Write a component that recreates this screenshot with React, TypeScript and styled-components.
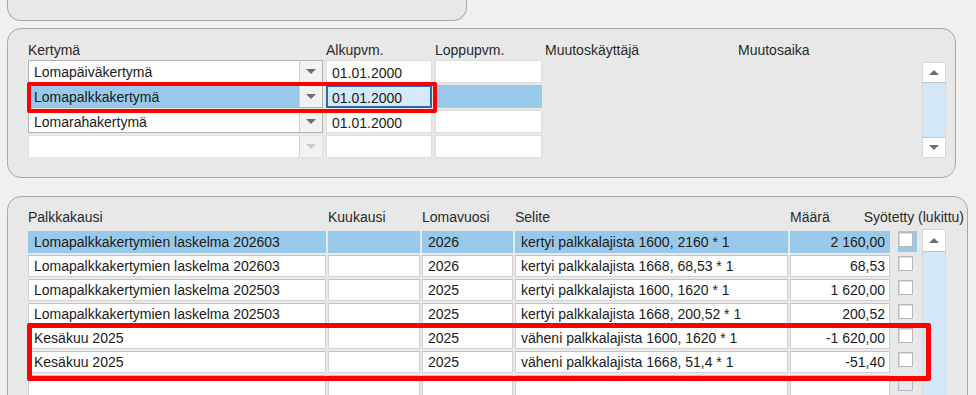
import * as React from "react";
import styled, { createGlobalStyle } from "styled-components";

const GlobalStyle = createGlobalStyle`
  html, body {
    margin: 0;
    height: 395px;
    overflow: hidden;
  }
  body {
    background: #f0f0f0;
    font-family: "Liberation Sans", Arial, sans-serif;
    font-size: 14px;
    color: #1a1a1a;
  }
`;

type Accrual = { name: string; start: string; selected?: boolean; focused?: boolean; disabled?: boolean };

const accruals: Accrual[] = [
  { name: "Lomapäiväkertymä", start: "01.01.2000" },
  { name: "Lomapalkkakertymä", start: "01.01.2000", selected: true, focused: true },
  { name: "Lomarahakertymä", start: "01.01.2000" },
  { name: "", start: "", disabled: true },
];

type Entry = { period: string; year: string; text: string; amount: string; selected?: boolean; empty?: boolean };

const entries: Entry[] = [
  { period: "Lomapalkkakertymien laskelma 202603", year: "2026", text: "kertyi palkkalajista 1600, 2160 * 1", amount: "2 160,00", selected: true },
  { period: "Lomapalkkakertymien laskelma 202603", year: "2026", text: "kertyi palkkalajista 1668, 68,53 * 1", amount: "68,53" },
  { period: "Lomapalkkakertymien laskelma 202503", year: "2025", text: "kertyi palkkalajista 1600, 1620 * 1", amount: "1 620,00" },
  { period: "Lomapalkkakertymien laskelma 202503", year: "2025", text: "kertyi palkkalajista 1668, 200,52 * 1", amount: "200,52" },
  { period: "Kesäkuu 2025", year: "2025", text: "väheni palkkalajista 1600, 1620 * 1", amount: "-1 620,00" },
  { period: "Kesäkuu 2025", year: "2025", text: "väheni palkkalajista 1668, 51,4 * 1", amount: "-51,40" },
  { period: "", year: "", text: "", amount: "", empty: true },
  { period: "", year: "", text: "", amount: "", empty: true },
];

const App = () => {
  return (
    <Page>
      <GlobalStyle />
      <TopPanel />

      <AccrualPanel>
        <AccrualGrid>
          <Label>Kertymä</Label>
          <Label>Alkupvm.</Label>
          <Label>Loppupvm.</Label>
          <Label>Muutoskäyttäjä</Label>
          <Label>Muutosaika</Label>
          <span />
          {accruals.map((a, i) => (
            <React.Fragment key={i}>
              <Combo $selected={a.selected} $disabled={a.disabled} style={{ gridRow: i + 2 }}>
                <ComboText>{a.name}</ComboText>
                <ComboButton>
                  <ArrowDown $disabled={a.disabled} />
                </ComboButton>
              </Combo>
              <DateInput $focused={a.focused} style={{ gridRow: i + 2 }}>
                {a.start}
              </DateInput>
              <DateInput $selected={a.selected} style={{ gridRow: i + 2 }} />
            </React.Fragment>
          ))}
          <Scrollbar $row="2 / span 4" $short>
            <ScrollButton>
              <ArrowUp />
            </ScrollButton>
            <ScrollTrack />
            <ScrollButton>
              <ArrowDown />
            </ScrollButton>
          </Scrollbar>
        </AccrualGrid>
      </AccrualPanel>

      <EntryPanel>
        <EntryGrid>
          <Label style={{ gridColumn: 1, gridRow: 1 }}>Palkkakausi</Label>
          <Label style={{ gridColumn: 2, gridRow: 1 }}>Kuukausi</Label>
          <Label style={{ gridColumn: 3, gridRow: 1 }}>Lomavuosi</Label>
          <Label style={{ gridColumn: 4, gridRow: 1 }}>Selite</Label>
          <Label style={{ gridColumn: 5, gridRow: 1 }}>Määrä</Label>
          <LockedLabel>Syötetty (lukittu)</LockedLabel>
          {entries.map((e, i) => (
            <React.Fragment key={i}>
              <Cell $selected={e.selected} style={{ gridRow: i + 2 }}>{e.period}</Cell>
              <Cell $selected={e.selected} style={{ gridRow: i + 2 }} />
              <Cell $selected={e.selected} style={{ gridRow: i + 2 }}>{e.year}</Cell>
              <Cell $selected={e.selected} style={{ gridRow: i + 2 }}>{e.text}</Cell>
              <Cell $selected={e.selected} $number style={{ gridRow: i + 2 }}>{e.amount}</Cell>
              <CheckCell $selected={e.selected} style={{ gridRow: i + 2 }}>
                <Checkbox $disabled={e.empty} />
              </CheckCell>
            </React.Fragment>
          ))}
          <Scrollbar $row="2 / -1">
            <ScrollButton $tall>
              <ArrowUp />
            </ScrollButton>
            <ScrollTrack />
          </Scrollbar>
        </EntryGrid>
      </EntryPanel>

      <Marker $left={27} $top={82} $width={410} $height={31} $thickness={4} />
      <Marker $left={27} $top={323} $width={904} $height={58} $thickness={5} />
    </Page>
  );
};

const Page = styled.div`
  position: relative;
  height: 395px;
  overflow: hidden;
  padding-left: 7px;
`;

const PanelBase = styled.div`
  box-sizing: border-box;
  background: #e8e8e8;
  border: 1px solid #a8a8a8;
  border-radius: 14px;
`;

const TopPanel = styled(PanelBase)`
  width: 460px;
  height: 21px;
  border-top: none;
  border-radius: 0 0 14px 14px;
`;

const AccrualPanel = styled(PanelBase)`
  margin-top: 7px;
  width: 949px;
  height: 150px;
  padding: 13px 0 0 20px;
`;

const EntryPanel = styled(PanelBase)`
  margin-top: 18px;
  width: 961px;
  height: 260px;
  padding: 12px 0 0 20px;
`;

const AccrualGrid = styled.div`
  display: grid;
  grid-template-columns: 295px 106px 107px 190px 181px 24px;
  grid-template-rows: 16px repeat(4, 23px);
  column-gap: 3px;
  row-gap: 2px;
`;

const EntryGrid = styled.div`
  display: grid;
  grid-template-columns: 298px 92px 91px 273px 100px 28px 24px 19px;
  grid-template-rows: 20px repeat(8, 22px);
  column-gap: 2px;
  row-gap: 2px;
`;

const Label = styled.div`
  line-height: 16px;
  color: #2a2a2a;
  white-space: nowrap;
`;

const LockedLabel = styled(Label)`
  grid-column: 5 / -1;
  grid-row: 1;
  justify-self: end;
  padding-right: 3px;
`;

const Combo = styled.div<{ $selected?: boolean; $disabled?: boolean }>`
  grid-column: 1;
  display: flex;
  box-sizing: border-box;
  border: 1px solid ${(p) => (p.$disabled ? "#e2e2e2" : "#b4b4b4")};
  background: ${(p) => (p.$selected ? "#99c9ea" : "#ffffff")};
`;

const ComboText = styled.div`
  flex: 1;
  display: flex;
  align-items: center;
  padding-left: 5px;
  white-space: nowrap;
`;

const ComboButton = styled.div`
  width: 22px;
  display: flex;
  align-items: center;
  justify-content: center;
  background: #f2f2f2;
  border-left: 1px solid #d0d0d0;
`;

const ArrowDown = styled.span<{ $disabled?: boolean }>`
  width: 0;
  height: 0;
  border-left: 5px solid transparent;
  border-right: 5px solid transparent;
  border-top: 5px solid ${(p) => (p.$disabled ? "#c9c9cc" : "#6c6c7c")};
`;

const ArrowUp = styled.span`
  width: 0;
  height: 0;
  border-left: 5px solid transparent;
  border-right: 5px solid transparent;
  border-bottom: 5px solid #6c6c7c;
`;

const DateInput = styled.div<{ $focused?: boolean; $selected?: boolean }>`
  box-sizing: border-box;
  display: flex;
  align-items: center;
  padding-left: ${(p) => (p.$focused ? "4px" : "5px")};
  padding-top: 2px;
  border: ${(p) =>
    p.$focused ? "2px solid #2c6aa6" : p.$selected ? "1px solid #99c9ea" : "1px solid #dedede"};
  background: ${(p) => (p.$focused ? "#d4e9f9" : p.$selected ? "#99c9ea" : "#ffffff")};
`;

const Scrollbar = styled.div<{ $row: string; $short?: boolean }>`
  grid-column: ${(p) => (p.$short ? 6 : 7)};
  grid-row: ${(p) => p.$row};
  margin-top: ${(p) => (p.$short ? "2px" : "-2px")};
  display: flex;
  flex-direction: column;
  box-sizing: border-box;
  border: 1px solid #d6d6d6;
  background: #ffffff;
`;

const ScrollButton = styled.div<{ $tall?: boolean }>`
  height: ${(p) => (p.$tall ? "21px" : "19px")};
  display: flex;
  align-items: center;
  justify-content: center;
  background: #ffffff;
`;

const ScrollTrack = styled.div`
  flex: 1;
  background: #d2e7f8;
  border-top: 1px solid #c4c4c4;
  border-bottom: 1px solid #c4c4c4;
`;

const Cell = styled.div<{ $selected?: boolean; $number?: boolean }>`
  box-sizing: border-box;
  display: flex;
  align-items: center;
  justify-content: ${(p) => (p.$number ? "flex-end" : "flex-start")};
  padding: ${(p) => (p.$number ? "0 4px 0 0" : "0 0 0 5px")};
  border: 1px solid ${(p) => (p.$selected ? "#99c9ea" : "#d2d2d2")};
  border-top-color: ${(p) => (p.$selected ? "#99c9ea" : "#c4c4c4")};
  background: ${(p) => (p.$selected ? "#99c9ea" : "#ffffff")};
  white-space: nowrap;
  overflow: hidden;
`;

const CheckCell = styled.div<{ $selected?: boolean }>`
  grid-column: 6;
  justify-self: end;
  margin-right: 3px;
  width: 19px;
  height: 21px;
  padding-top: 1px;
  box-sizing: border-box;
  background: ${(p) => (p.$selected ? "#99c9ea" : "transparent")};
`;

const Checkbox = styled.div<{ $disabled?: boolean }>`
  width: 15px;
  height: 15px;
  box-sizing: border-box;
  border: 1px solid #b8b8b8;
  box-shadow: inset 1px 1px 0 #dedede;
  background: ${(p) => (p.$disabled ? "#e4ebf2" : "#ffffff")};
`;

const Marker = styled.div<{ $left: number; $top: number; $width: number; $height: number; $thickness: number }>`
  position: absolute;
  left: ${(p) => p.$left}px;
  top: ${(p) => p.$top}px;
  width: ${(p) => p.$width}px;
  height: ${(p) => p.$height}px;
  box-sizing: border-box;
  border: ${(p) => p.$thickness}px solid #ff0000;
  border-radius: 2px;
  pointer-events: none;
`;

export default App;
